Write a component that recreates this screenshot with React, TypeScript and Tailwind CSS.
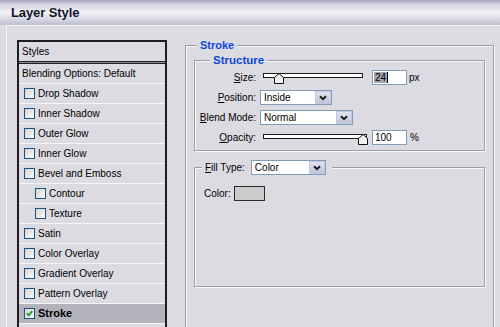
import React from "react";

const FONT = { fontFamily: '"Liberation Sans", Arial, sans-serif' };

function Checkbox({ checked }: { checked?: boolean }) {
  return (
    <span className="w-[11px] h-[11px] shrink-0 border border-[#1c5180] bg-linear-to-br from-[#d4d4d0] to-[#fbfbfa] flex items-center justify-center">
      {checked && (
        <svg width="7" height="7" viewBox="0 0 7 7">
          <path d="M0.8 3.4 L2.7 5.4 L6.3 1.2" stroke="#1f9e1f" strokeWidth="1.9" fill="none" />
        </svg>
      )}
    </span>
  );
}

function Chevron() {
  return (
    <svg width="8" height="6" viewBox="0 0 8 6">
      <path d="M1 1.2 L4 4.2 L7 1.2" stroke="#1a1a1a" strokeWidth="2" fill="none" />
    </svg>
  );
}

function Select({ value, w }: { value: string; w: string }) {
  return (
    <div className={`${w} h-[15px] shrink-0 border border-[#7f9db9] bg-white flex items-center`}>
      <span className="flex-1 pl-[3px] text-[10px] leading-[13px] text-black">{value}</span>
      <span className="w-[16px] h-[13px] border border-[#c3cbe0] bg-linear-to-b from-[#e2e5ef] to-[#bfc4d6] flex items-center justify-center">
        <Chevron />
      </span>
    </div>
  );
}

function Thumb({ left, top }: { left: string; top: string }) {
  return (
    <svg className={`absolute ${left} ${top}`} width="10" height="11" viewBox="0 0 10 11">
      <path d="M0.5 4.5 L5 0.5 L9.5 4.5 L9.5 10.5 L0.5 10.5 Z" fill="#f2f2f2" stroke="#111" strokeWidth="1" />
    </svg>
  );
}

const items: { label: string; indent?: boolean; checked?: boolean; selected?: boolean }[] = [
  { label: "Drop Shadow" },
  { label: "Inner Shadow" },
  { label: "Outer Glow" },
  { label: "Inner Glow" },
  { label: "Bevel and Emboss" },
  { label: "Contour", indent: true },
  { label: "Texture", indent: true },
  { label: "Satin" },
  { label: "Color Overlay" },
  { label: "Gradient Overlay" },
  { label: "Pattern Overlay" },
  { label: "Stroke", checked: true, selected: true },
];

export default function App() {
  return (
    <div className="w-[500px] h-[327px] overflow-hidden flex flex-col bg-[#dcdbe2] text-black" style={FONT}>
      <div className="h-[25px] shrink-0 flex items-center pl-[11px] bg-[linear-gradient(to_bottom,#a6a6be_0%,#d6d6e2_18%,#f1f1f5_50%,#dadae6_75%,#bdbdd0_100%)]">
        <span className="text-[13px] font-bold text-[#15152a] tracking-[-0.1px]">Layer Style</span>
      </div>
      <div className="flex-1 ml-[6px] border-l border-t border-[#f4f4f8] flex pl-[10px] pt-[14px]">
        {/* Left styles list */}
        <div className="w-[150px] h-[400px] shrink-0 border-2 border-[#1e1e1e] flex flex-col">
          <div className="h-[19px] flex items-center pl-[3px] text-[10px]">Styles</div>
          <div className="h-[3px] border-t border-b border-[#1e1e1e] bg-[#8a8a92]" />
          <div className="h-[20px] border-b border-[#f6f6f9] flex items-center pl-[3px] text-[10px]">
            Blending Options: Default
          </div>
          {items.map((it) => (
            <div
              key={it.label}
              className={`h-[20px] border-b border-[#f6f6f9] flex items-center gap-[3px] text-[10px] ${
                it.indent ? "pl-[16px]" : "pl-[5px]"
              } ${it.selected ? "bg-[#b3b3bb] font-bold text-[11px]" : ""}`}
            >
              <Checkbox checked={it.checked} />
              <span>{it.label}</span>
            </div>
          ))}
          <div className="h-[20px] border-b border-[#f6f6f9]" />
        </div>

        {/* Right panel */}
        <fieldset className="ml-[18px] -mt-[2px] w-[309px] h-[400px] shrink-0 border border-[#9c9ca6] shadow-[inset_1px_1px_0_#fafafc,1px_1px_0_#fafafc] px-[8px] pt-[1px]">
          <legend className="ml-[3px] px-[3px] leading-[14px] text-[11px] font-bold text-[#1048dc] bg-[#dcdbe2]">
            Stroke
          </legend>

          <fieldset className="border border-[#9c9ca6] shadow-[inset_1px_1px_0_#fafafc,1px_1px_0_#fafafc] pt-[3px] pb-[5px]">
            <legend className="ml-[15px] px-[3px] leading-[14px] text-[11.5px] font-bold text-[#1048dc] bg-[#dcdbe2]">
              Structure
            </legend>
            <div className="grid grid-cols-[61px_1fr] gap-x-[4px] gap-y-[5px] text-[10px]">
              <div className="h-[15px] flex items-center justify-end">
                <span className="underline">S</span>ize:
              </div>
              <div className="h-[15px] flex items-center">
                <div className="relative ml-[3px] w-[100px] h-[15px]">
                  <div className="mt-[3px] h-[5px] border border-[#1a1a1a] bg-white" />
                  <Thumb left="left-[11px]" top="top-[3px]" />
                </div>
                <div className="ml-[9px] w-[35px] h-[15px] border border-[#7f9db9] bg-white flex items-center pl-[1px]">
                  <span className="bg-[#a3a5b1] leading-[11px] px-[1px]">24</span>
                  <span className="w-px h-[11px] bg-black" />
                </div>
                <span className="ml-[2px]">px</span>
              </div>

              <div className="h-[15px] flex items-center justify-end">
                <span className="underline">P</span>osition:
              </div>
              <div className="h-[15px] flex items-center">
                <Select value="Inside" w="w-[72px]" />
              </div>

              <div className="h-[15px] flex items-center justify-end">
                <span className="underline">B</span>lend Mode:
              </div>
              <div className="h-[15px] flex items-center">
                <Select value="Normal" w="w-[93px]" />
              </div>

              <div className="h-[15px] flex items-center justify-end">
                <span className="underline">O</span>pacity:
              </div>
              <div className="h-[15px] flex items-center">
                <div className="relative ml-[3px] w-[104px] h-[15px]">
                  <div className="mt-[4px] h-[5px] border border-[#1a1a1a] bg-white" />
                  <Thumb left="left-[95px]" top="top-[4px]" />
                </div>
                <div className="ml-[5px] w-[35px] h-[15px] border border-[#7f9db9] bg-white flex items-center pl-[2px]">
                  100
                </div>
                <span className="ml-[3px]">%</span>
              </div>
            </div>
          </fieldset>

          <fieldset className="mt-[9px] border border-[#9c9ca6] shadow-[inset_1px_1px_0_#fafafc,1px_1px_0_#fafafc]">
            <legend className="ml-[7px] pl-[3px] pr-[6px] bg-[#dcdbe2] flex items-center gap-[6px] text-[10px]">
              <span>
                <span className="underline">F</span>ill Type:
              </span>
              <Select value="Color" w="w-[75px]" />
            </legend>
            <div className="h-[111px] pt-[11px] pl-[9px] flex items-start gap-[3px] text-[10px]">
              <span className="h-[15px] flex items-center">Color:</span>
              <span className="w-[31px] h-[15px] border border-[#2a2a2a] bg-[#cbcbcb]" />
            </div>
          </fieldset>
        </fieldset>
      </div>
    </div>
  );
}
